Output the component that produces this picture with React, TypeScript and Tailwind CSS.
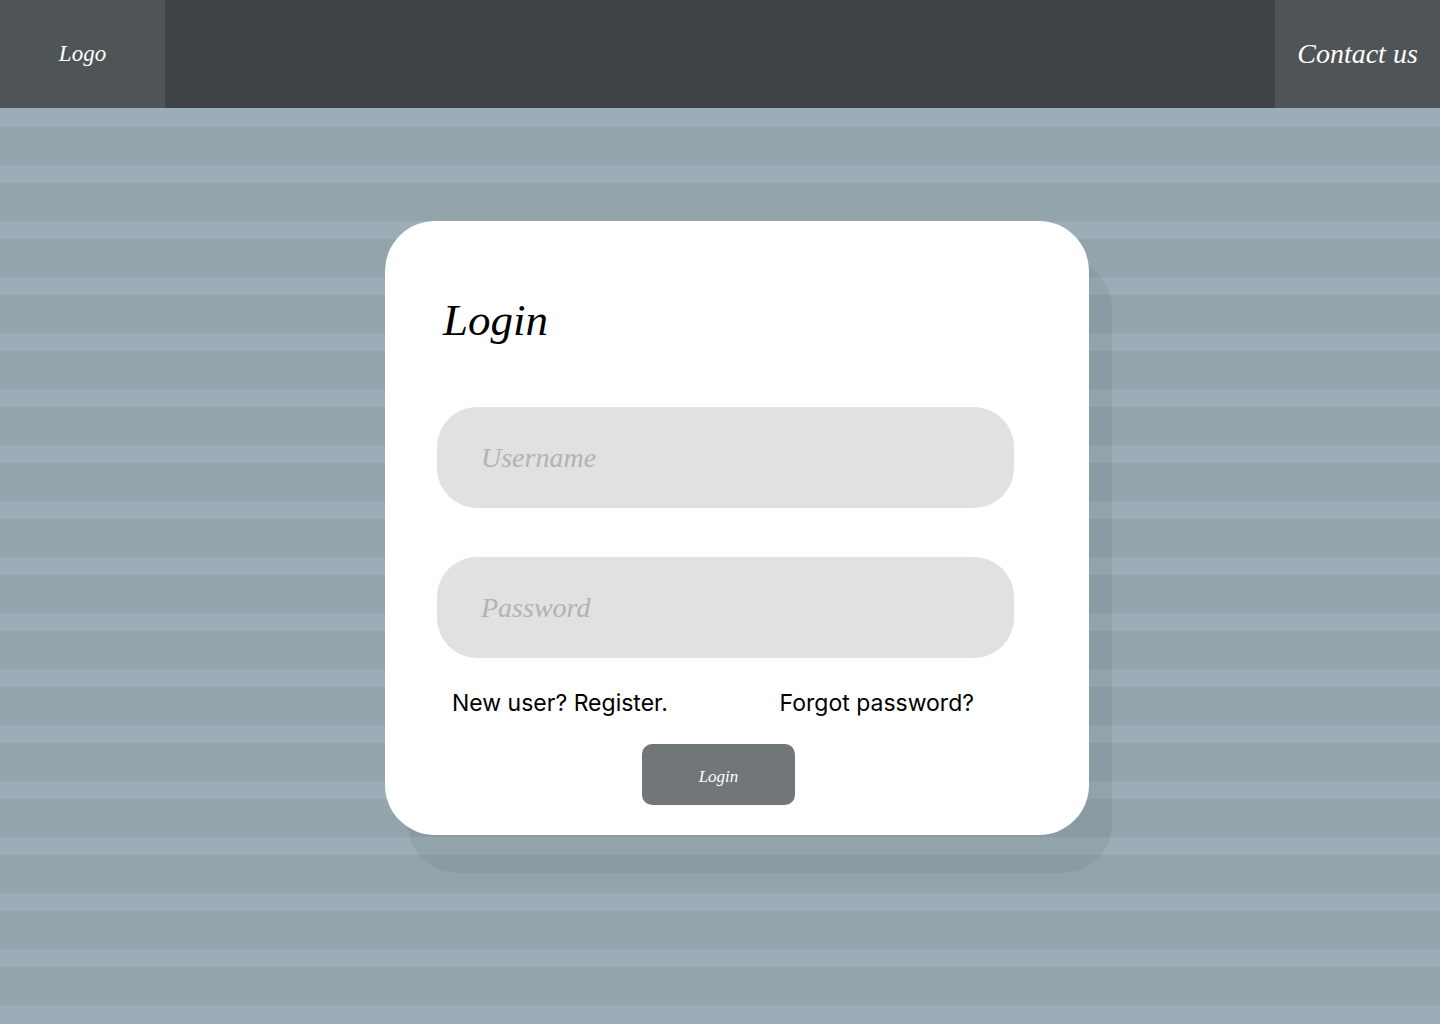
import React from "react";

const script = "font-['Liberation_Serif',serif] italic";

function Field({ id, type, label }: { id: string; type: string; label: string }) {
  return (
    <input
      id={id}
      type={type}
      aria-label={label}
      placeholder={label}
      className={`${script} block h-[101px] w-full rounded-[40px] bg-[#e1e1e1] px-11 text-[28px] text-[#555555] placeholder:text-[#b3b3b3] placeholder:opacity-100`}
    />
  );
}

export default function App() {
  return (
    <div className="flex min-h-screen flex-col bg-[#9dadb7]">
      <header className="flex h-[108px] justify-between bg-[#404446]">
        <a
          href="#home"
          className={`${script} flex w-[165px] items-center justify-center bg-[#4f5456] text-[23px] text-white`}
        >
          Logo
        </a>
        <a
          href="#contact"
          className={`${script} flex w-[165px] items-center justify-center bg-[#4f5456] text-[28px] text-white`}
        >
          Contact us
        </a>
      </header>
      <main className="flex grow justify-center border-y border-[#9dadb7] bg-[repeating-linear-gradient(to_bottom,#9dadb7_0px,#9dadb7_18px,#94a4ac_18px,#94a4ac_56px)] bg-origin-padding pt-28 pb-28 pl-[34px]">
        <form
          onSubmit={(e) => e.preventDefault()}
          className="w-full max-w-[704px] self-start rounded-[50px] bg-white pt-[60px] pr-[75px] pb-[30px] pl-[52px] shadow-[23px_38px_0px_rgba(60,75,80,0.1)]"
        >
          <h1 className={`${script} pl-1.5 text-[45px] leading-[78px] text-black`}>Login</h1>
          <div className="mt-12 flex flex-col gap-[49px]">
            <Field id="username" type="text" label="Username" />
            <Field id="password" type="password" label="Password" />
          </div>
          <div className="mt-7 flex justify-between pr-10 pl-[15px] font-['Inter',sans-serif] text-[23px] leading-[34px] text-black">
            <a href="#register">New user? Register.</a>
            <a href="#forgot">Forgot password?</a>
          </div>
          <div className="mt-6 flex justify-center pr-3.5">
            <button
              type="submit"
              className={`${script} h-[61px] w-[153px] rounded-[10px] bg-[#717678] pt-1 text-[17px] text-white`}
            >
              Login
            </button>
          </div>
        </form>
      </main>
    </div>
  );
}
